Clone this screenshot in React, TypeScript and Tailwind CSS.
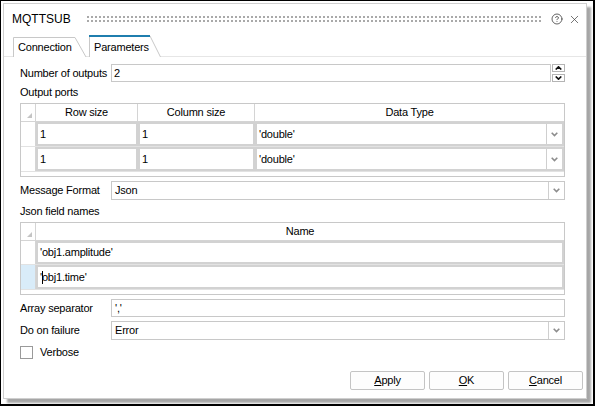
import { CircleHelp, X } from "lucide-react";

const font = "font-['Liberation_Sans',Arial,sans-serif]";

function Chevron({ color = "#8c8c8c" }: { color?: string }) {
  return (
    <svg width="7" height="5" viewBox="0 0 7 5">
      <path d="M0.7 0.8 L3.5 3.6 L6.3 0.8" fill="none" stroke={color} strokeWidth="1.6" />
    </svg>
  );
}

function DropButton() {
  return (
    <div className="flex w-[16px] shrink-0 items-center justify-center border-l border-[#cfcfcf] bg-white">
      <Chevron />
    </div>
  );
}

function Grip() {
  return (
    <svg className="h-[8px] flex-1" height="8">
      <defs>
        <pattern id="dots" width="4" height="4" patternUnits="userSpaceOnUse">
          <rect x="0" y="0" width="2" height="2" fill="#a9a9a9" />
        </pattern>
      </defs>
      <rect width="100%" height="8" fill="url(#dots)" />
    </svg>
  );
}

function Field({ label, children, h = "h-[18px]" }: { label: string; children: React.ReactNode; h?: string }) {
  return (
    <div className={`flex ${h} items-stretch`}>
      <div className="flex w-[91px] shrink-0 items-center">{label}</div>
      {children}
    </div>
  );
}

function Corner() {
  return (
    <div className="relative w-[15px] shrink-0 border-r border-[#d4d4d4]">
      <svg className="absolute bottom-[3px] right-[3px]" width="5" height="5" viewBox="0 0 5 5">
        <path d="M5 0 L5 5 L0 5 Z" fill="#c4c4c4" />
      </svg>
    </div>
  );
}

function Cell({ children, className = "" }: { children?: React.ReactNode; className?: string }) {
  return (
    <div className={`flex items-center border-2 border-[#d2d2d2] bg-white pl-[2px] ${className}`}>{children}</div>
  );
}

function OutputPorts() {
  const rows = [
    ["1", "1", "'double'"],
    ["1", "1", "'double'"],
  ];
  return (
    <div className="flex h-[74px] flex-col border border-[#c8c8c8] bg-white">
      <div className="flex h-[18px] border-b border-[#d4d4d4]">
        <Corner />
        <div className="flex w-[102px] items-center justify-center border-r border-[#d4d4d4]">Row size</div>
        <div className="flex w-[117px] items-center justify-center border-r border-[#d4d4d4]">Column size</div>
        <div className="flex flex-1 items-center justify-center">Data Type</div>
      </div>
      {rows.map((r, i) => (
        <div key={i} className="flex h-[25px] border-b border-[#e2e2e2]">
          <div className="w-[15px] shrink-0 border-r border-[#d4d4d4]" />
          <Cell className="w-[102px]">{r[0]}</Cell>
          <Cell className="w-[117px]">{r[1]}</Cell>
          <div className="flex flex-1 border-2 border-[#d2d2d2]">
            <div className="flex flex-1 items-center pl-[2px]">{r[2]}</div>
            <DropButton />
          </div>
        </div>
      ))}
    </div>
  );
}

function JsonNames() {
  return (
    <div className="flex h-[73px] flex-col border border-[#c8c8c8] bg-white">
      <div className="flex h-[18px] border-b border-[#d4d4d4]">
        <Corner />
        <div className="flex flex-1 items-center justify-center">Name</div>
      </div>
      <div className="flex h-[24px] border-b border-[#e2e2e2]">
        <div className="w-[15px] shrink-0 border-r border-[#d4d4d4]" />
        <Cell className="flex-1">'obj1.amplitude'</Cell>
      </div>
      <div className="flex h-[25px] border-b border-[#e2e2e2]">
        <div className="w-[15px] shrink-0 border-r border-[#d4d4d4] bg-[#d9ecf9]" />
        <Cell className="flex-1">
          <span>'</span>
          <span className="mr-[-1px] inline-block h-[13px] w-px bg-black" />
          <span>obj1.time'</span>
        </Cell>
      </div>
    </div>
  );
}

function Btn({ first, rest }: { first: string; rest: string }) {
  return (
    <button className="flex h-[19px] w-[75px] items-center justify-center rounded-[2px] border border-[#c4c4c4] bg-[#fdfdfd] text-black">
      <span className="underline underline-offset-[1px]">{first}</span>
      {rest}
    </button>
  );
}

export default function App() {
  return (
    <div className={`${font} h-[406px] w-[595px] border-b-2 border-l border-r-2 border-t border-black bg-white pl-[2px] pt-[2px] text-[11px] tracking-[-0.2px] text-black`}>
      <div className="flex h-[396px] w-[584px] flex-col border border-[#cfcfcf] bg-white shadow-[4px_4px_2px_rgba(0,0,0,0.35)]">
        {/* title bar */}
        <div className="flex h-[30px] shrink-0 items-center pl-[8px] pr-[5px]">
          <span className="text-[12px] tracking-normal">MQTTSUB</span>
          <div className="ml-[16px] mr-[9px] flex flex-1 translate-y-[1px]">
            <Grip />
          </div>
          <CircleHelp size={12} strokeWidth={1.6} color="#3c3c3c" />
          <X className="ml-[5px]" size={13} strokeWidth={1.3} color="#3c3c3c" />
        </div>

        {/* tabs */}
        <div className="flex h-[23px] shrink-0 items-end border-b border-[#e6e6e6] pl-[9px]">
          <div className="relative mb-[-1px] flex h-[20px] w-[74px] items-center pl-[5px] pt-[1px]">
            <svg className="absolute inset-0" width="74" height="20" viewBox="0 0 74 20">
              <path d="M0.5 20 V0.5 H62 L73 20" fill="#fff" stroke="#c8c8c8" />
            </svg>
            <span className="relative">Connection</span>
          </div>
          <div className="relative z-10 mb-[-1px] ml-[2px] flex h-[22px] w-[72px] items-center pl-[5px] pt-[2px]">
            <svg className="absolute inset-0" width="72" height="22" viewBox="0 0 72 22">
              <path d="M0.5 22 V1 H61 L71.5 22" fill="#fff" stroke="#c8c8c8" />
              <rect x="0" y="0" width="61" height="2" fill="#1f7eae" />
            </svg>
            <span className="relative">Parameters</span>
          </div>
        </div>

        {/* content */}
        <div className="ml-[16px] flex w-[545px] flex-col">
          <div className="mt-[7px]">
            <Field label="Number of outputs">
              <div className="flex w-[440px] items-center border border-[#c8c8c8] pl-[2px]">2</div>
              <div className="ml-[1px] flex w-[13px] flex-col justify-between">
                <div className="flex h-[8px] items-center justify-center border border-[#b4b4b4]">
                  <svg width="7" height="4" viewBox="0 0 7 4"><path d="M0.7 3.5 L3.5 0.8 L6.3 3.5" fill="none" stroke="#111" strokeWidth="1.6" /></svg>
                </div>
                <div className="flex h-[8px] items-center justify-center border border-[#b4b4b4]">
                  <svg width="7" height="4" viewBox="0 0 7 4"><path d="M0.7 0.5 L3.5 3.2 L6.3 0.5" fill="none" stroke="#111" strokeWidth="1.6" /></svg>
                </div>
              </div>
            </Field>
          </div>

          <div className="mt-[2px] flex h-[16px] items-center">Output ports</div>
          <div className="mt-[3px]">
            <OutputPorts />
          </div>

          <div className="mt-[4px]">
            <Field label="Message Format" h="h-[19px]">
              <div className="flex flex-1 border border-[#c8c8c8]">
                <div className="flex flex-1 items-center pl-[3px]">Json</div>
                <DropButton />
              </div>
            </Field>
          </div>

          <div className="mt-[3px] flex h-[16px] items-center">Json field names</div>
          <div className="mt-[3px]">
            <JsonNames />
          </div>

          <div className="mt-[4px]">
            <Field label="Array separator">
              <div className="flex flex-1 items-center border border-[#c8c8c8] pl-[3px]">','</div>
            </Field>
          </div>

          <div className="mt-[4px]">
            <Field label="Do on failure" h="h-[19px]">
              <div className="flex flex-1 border border-[#c8c8c8]">
                <div className="flex flex-1 items-center pl-[3px]">Error</div>
                <DropButton />
              </div>
            </Field>
          </div>

          <div className="mt-[6px] flex h-[13px] items-center">
            <div className="h-[13px] w-[13px] border border-[#9a9a9a] bg-white" />
            <span className="ml-[7px]">Verbose</span>
          </div>
        </div>

        <div className="mt-[12px] flex justify-end gap-[4px] pr-[3px]">
          <Btn first="A" rest="pply" />
          <Btn first="O" rest="K" />
          <Btn first="C" rest="ancel" />
        </div>
      </div>
    </div>
  );
}
